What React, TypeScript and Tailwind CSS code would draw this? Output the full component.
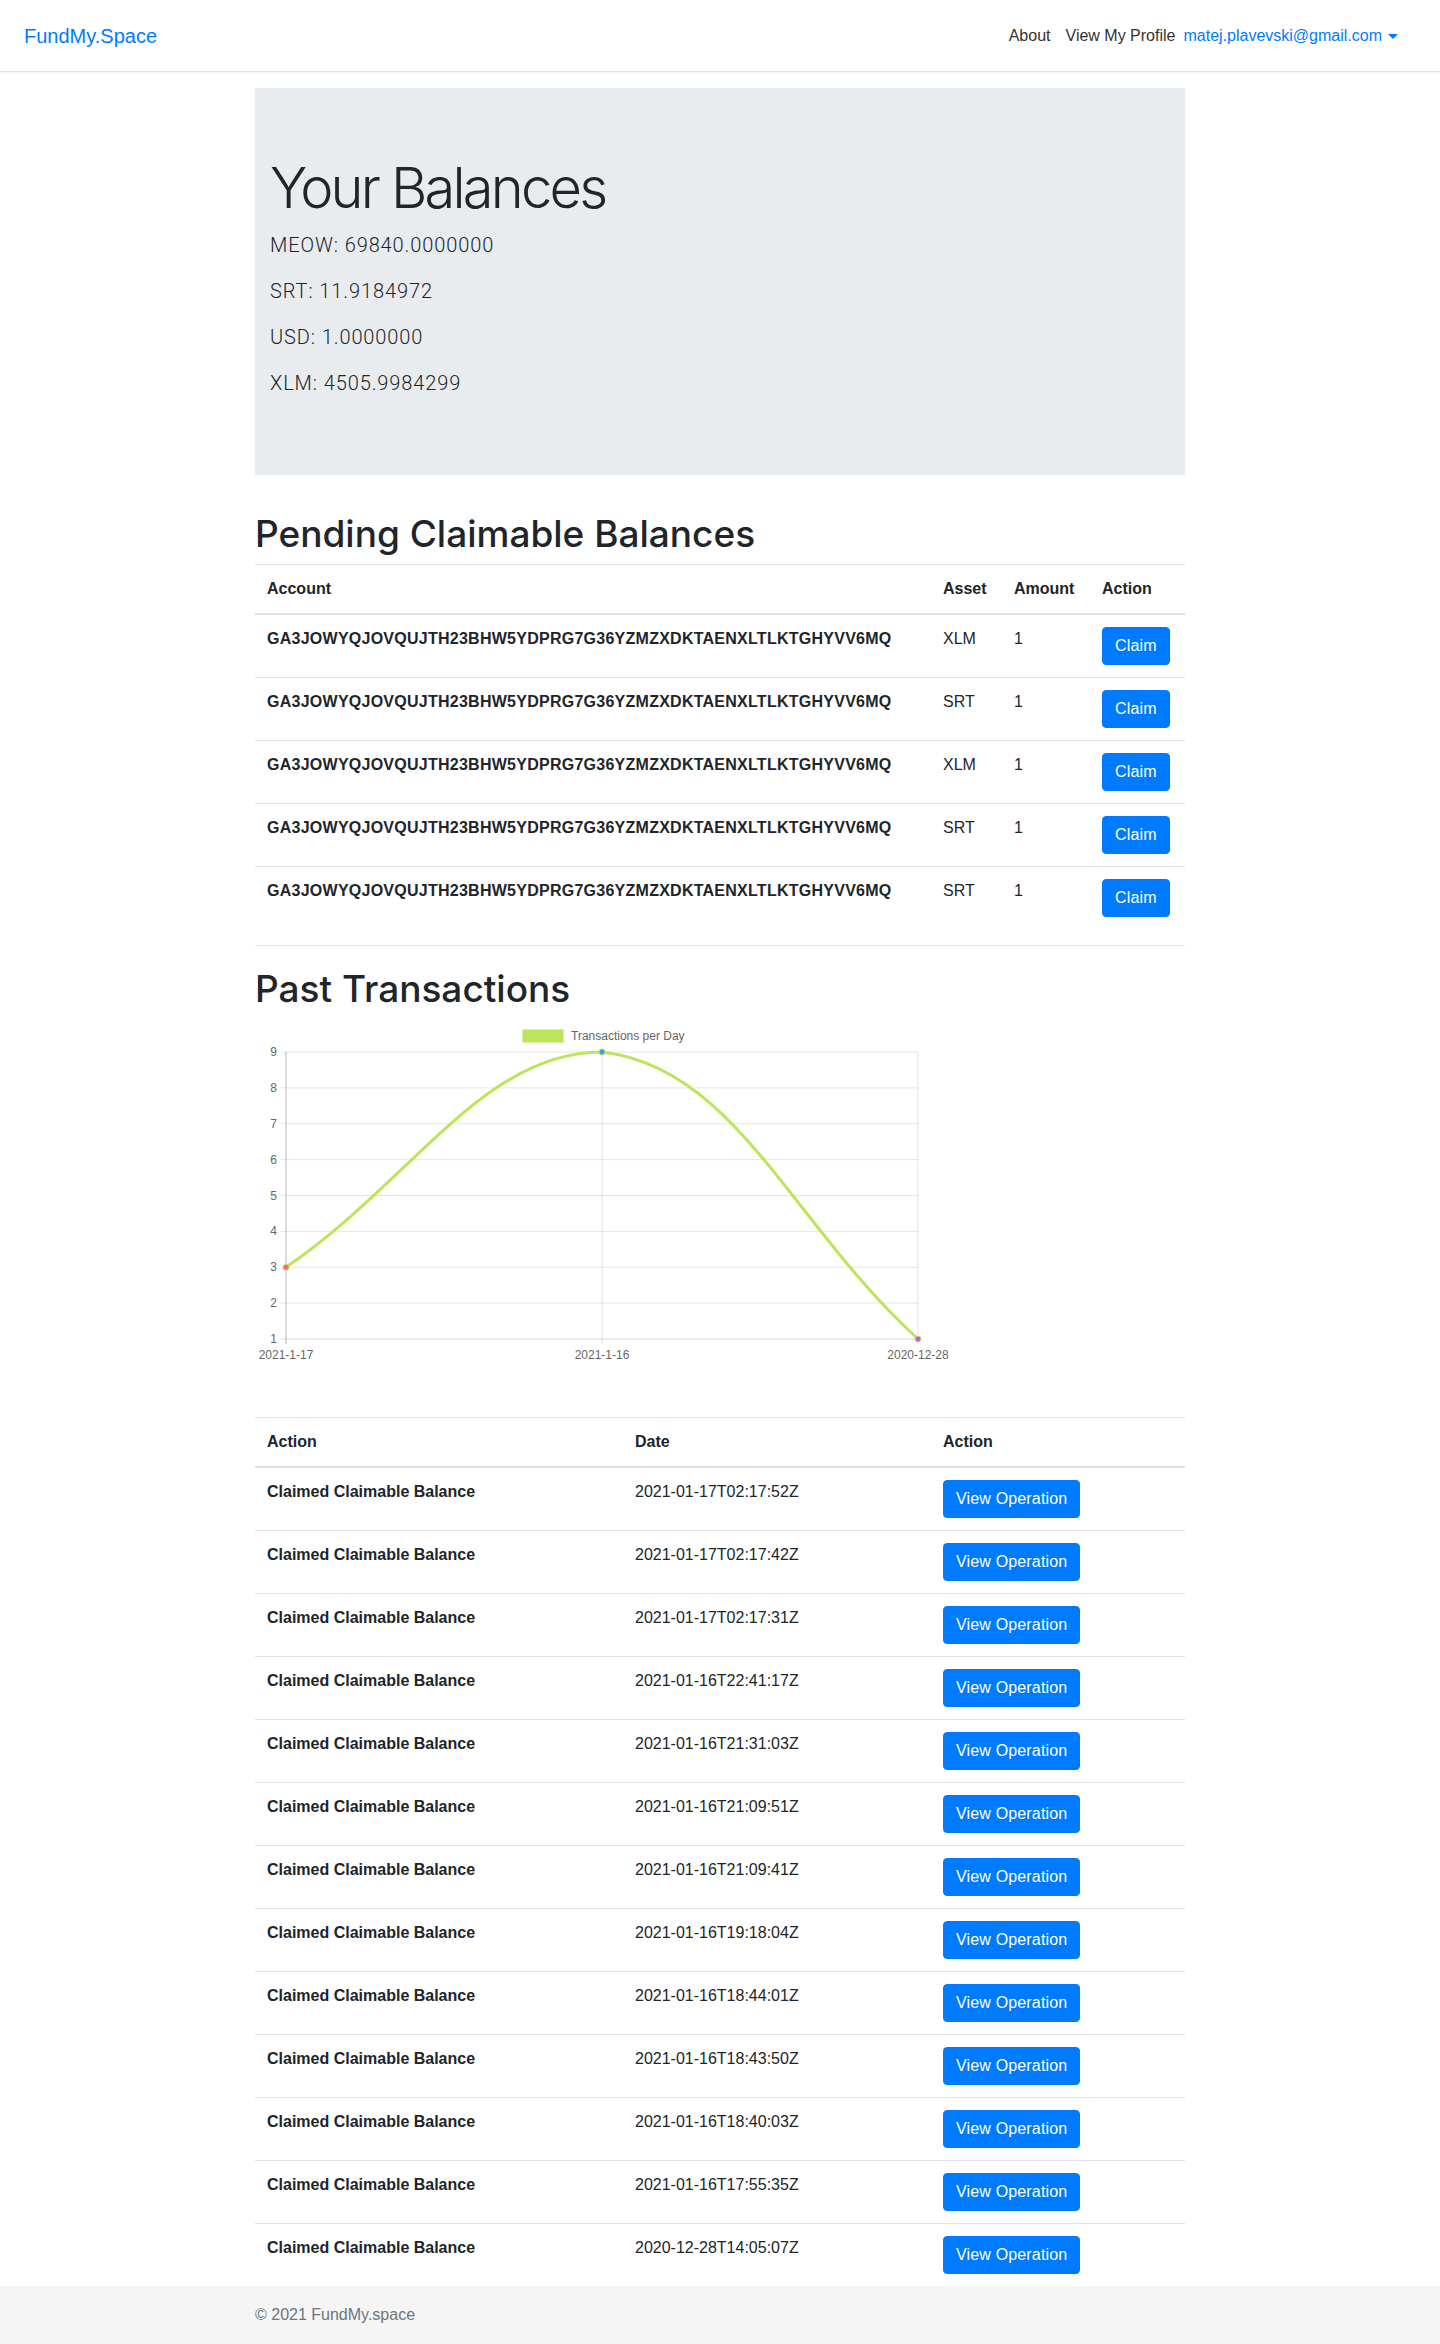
import React from 'react'

const ACCOUNT = 'GA3JOWYQJOVQUJTH23BHW5YDPRG7G36YZMZXDKTAENXLTLKTGHYVV6MQ'

const balances = [
  ['MEOW', '69840.0000000'],
  ['SRT', '11.9184972'],
  ['USD', '1.0000000'],
  ['XLM', '4505.9984299'],
]

const claims = ['XLM', 'SRT', 'XLM', 'SRT', 'SRT']

const txs = [
  '2021-01-17T02:17:52Z',
  '2021-01-17T02:17:42Z',
  '2021-01-17T02:17:31Z',
  '2021-01-16T22:41:17Z',
  '2021-01-16T21:31:03Z',
  '2021-01-16T21:09:51Z',
  '2021-01-16T21:09:41Z',
  '2021-01-16T19:18:04Z',
  '2021-01-16T18:44:01Z',
  '2021-01-16T18:43:50Z',
  '2021-01-16T18:40:03Z',
  '2021-01-16T17:55:35Z',
  '2020-12-28T14:05:07Z',
]

function Btn({ children }: { children: React.ReactNode }){
  return (
    <button className="rounded-[4px] border border-[#007bff] bg-[#007bff] px-3 py-[6px] text-[16px] leading-6 tracking-[0.01em] text-white">
      {children}
    </button>
  )
}

// chart geometry (svg coords)
const L = 31, R = 663, M = 347, T = 34, B = 321
const yOf = (v: number) => B - (v - 1) * ((B - T) / 8)

function Chart(){
  const ticks = [1, 2, 3, 4, 5, 6, 7, 8, 9]
  return (
    <svg width={700} height={350} className="block" fontFamily="'Liberation Sans', Arial, sans-serif">
      {/* legend */}
      <rect x={268} y={12} width={40} height={12} fill="#bce55c" stroke="#b5e350" />
      <text x={316} y={22} fontSize={12} fill="#666">Transactions per Day</text>

      {/* horizontal grid */}
      {ticks.map((v)=> (
        <g key={v}>
          <line x1={L - 5} x2={R} y1={yOf(v)} y2={yOf(v)} stroke="rgba(0,0,0,0.1)" strokeWidth={v === 1 ? 1.6 : 1} />
          <text x={22} y={yOf(v) + 4} fontSize={12} fill="#666" textAnchor="end">{v}</text>
        </g>
      ))}
      {/* vertical grid */}
      {[L, M, R].map((x)=> (
        <line key={x} x1={x} x2={x} y1={T} y2={B + 5} stroke={x === L ? 'rgba(0,0,0,0.18)' : 'rgba(0,0,0,0.1)'} strokeWidth={x === L ? 1.6 : 1} />
      ))}
      <text x={L} y={341} fontSize={12} fill="#666" textAnchor="middle">2021-1-17</text>
      <text x={M} y={341} fontSize={12} fill="#666" textAnchor="middle">2021-1-16</text>
      <text x={R} y={341} fontSize={12} fill="#666" textAnchor="middle">2020-12-28</text>

      <path
        d={`M${L},${yOf(3)} C157.4,163.15 227.6,${T} ${M},${T} C480.4,49.1 536.6,206.2 ${R},${B}`}
        fill="none" stroke="#bce55c" strokeWidth={3} />
      <circle cx={L} cy={yOf(3)} r={3} fill="#ff6384" stroke="#bce55c" strokeWidth={1} />
      <circle cx={M} cy={T} r={3} fill="#36a2eb" stroke="#bce55c" strokeWidth={1} />
      <circle cx={R} cy={B} r={3} fill="#c45ee0" stroke="#bce55c" strokeWidth={1} />
    </svg>
  )
}

export default function App(){
  return (
    <div className="min-h-[2344px] bg-white font-['Liberation_Sans',Arial,sans-serif] text-[16px] leading-6 text-[#212529]">
      <nav className="flex h-[72px] items-center justify-between border-b border-[#dee2e6] pl-6 pr-[42px] shadow-[0_1px_3px_rgba(0,0,0,0.06)]">
        <a className="text-[20px] leading-[30px] text-[#007bff]">FundMy.Space</a>
        <div className="flex items-center">
          <a className="mr-[15px] text-[#333]">About</a>
          <a className="mr-[8px] text-[#333]">View My Profile</a>
          <a className="text-[#007bff]">matej.plavevski@gmail.com</a>
          <span className="ml-[6px] mt-[2px] h-0 w-0 border-x-[5px] border-t-[5px] border-x-transparent border-t-[#007bff]" />
        </div>
      </nav>

      <main className="mx-auto w-[930px]">
        <section className="mb-[37px] mt-4 bg-[#e9ecef] px-[15px] pb-[61px] pt-[67px]">
          <h1 className="mb-2 font-['Inter',sans-serif] text-[56px] font-light leading-[1.2] tracking-[-0.05em]">Your Balances</h1>
          {balances.map(([k, v])=> (
            <p key={k} className="mb-4 font-['Roboto',sans-serif] text-[20px] font-light leading-[30px] tracking-[0.045em]">{k}: {v}</p>
          ))}
        </section>

        <h2 className="mb-[9px] font-['Inter',sans-serif] text-[37px] font-medium leading-[43px]">Pending Claimable Balances</h2>
        <table className="mb-4 w-full">
          <thead>
            <tr>
              <th className="w-[676px] border-t border-b-2 border-[#dee2e6] px-3 py-3 text-left">Account</th>
              <th className="w-[71px] border-t border-b-2 border-[#dee2e6] px-3 py-3 text-left">Asset</th>
              <th className="w-[88px] border-t border-b-2 border-[#dee2e6] px-3 py-3 text-left">Amount</th>
              <th className="border-t border-b-2 border-[#dee2e6] px-3 py-3 text-left">Action</th>
            </tr>
          </thead>
          <tbody>
            {claims.map((a, i)=> (
              <tr key={i}>
                <td className="border-t border-[#dee2e6] px-3 py-3 align-top font-bold tracking-[0.016em]">{ACCOUNT}</td>
                <td className="border-t border-[#dee2e6] px-3 py-3 align-top">{a}</td>
                <td className="border-t border-[#dee2e6] px-3 py-3 align-top">1</td>
                <td className="border-t border-[#dee2e6] px-3 py-3 align-top"><Btn>Claim</Btn></td>
              </tr>
            ))}
          </tbody>
        </table>
        <hr className="mb-[21px] border-t border-[rgba(0,0,0,0.1)]" />

        <h2 className="mb-2 font-['Inter',sans-serif] text-[37px] font-medium leading-[43px]">Past Transactions</h2>
        <Chart />

        <table className="mt-[49px] w-full">
          <thead>
            <tr>
              <th className="w-[368px] border-t border-b-2 border-[#dee2e6] px-3 py-3 text-left">Action</th>
              <th className="w-[308px] border-t border-b-2 border-[#dee2e6] px-3 py-3 text-left">Date</th>
              <th className="border-t border-b-2 border-[#dee2e6] px-3 py-3 text-left">Action</th>
            </tr>
          </thead>
          <tbody>
            {txs.map((d)=> (
              <tr key={d}>
                <td className="border-t border-[#dee2e6] px-3 py-3 align-top font-bold">Claimed Claimable Balance</td>
                <td className="border-t border-[#dee2e6] px-3 py-3 align-top">{d}</td>
                <td className="border-t border-[#dee2e6] px-3 py-3 align-top"><Btn>View Operation</Btn></td>
              </tr>
            ))}
          </tbody>
        </table>
      </main>

      <footer className="bg-[#f5f5f5] py-[17px]">
        <div className="mx-auto w-[930px] text-[#6c757d]">© 2021 FundMy.space</div>
      </footer>
    </div>
  )
}
